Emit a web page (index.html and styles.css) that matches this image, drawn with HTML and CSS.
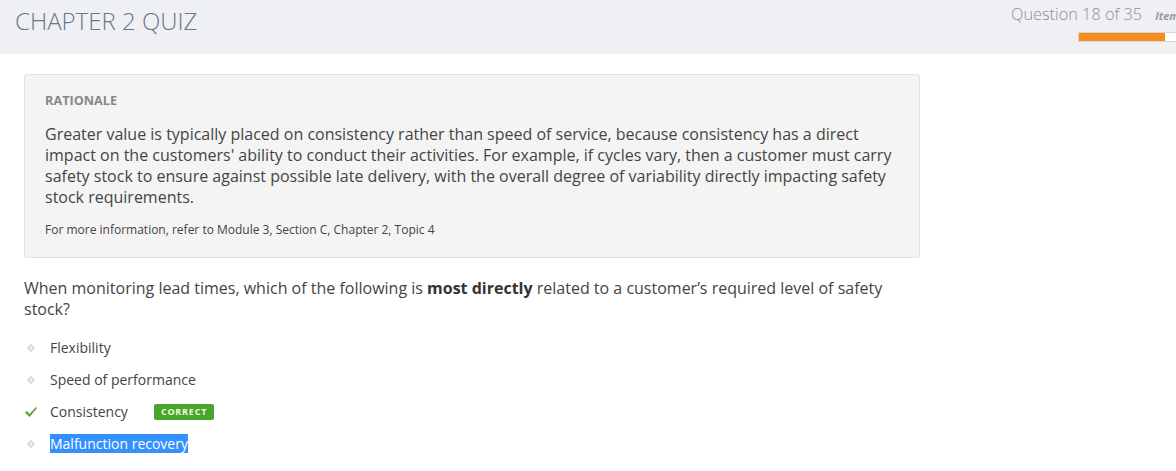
FILE: index.html
```html
<!DOCTYPE html>
<html lang="en">
<head>
<meta charset="utf-8">
<title>Chapter 2 Quiz</title>
<link rel="stylesheet" href="styles.css">
</head>
<body>
<header class="topbar">
  <h1 class="title">CHAPTER 2 QUIZ</h1>
  <div class="meta">
    <div class="meta-row">
      <span class="qcount">Question 18 of 35</span>
      <span class="item-label">Item 18</span>
    </div>
    <div class="progress"><div class="progress-fill" style="width:86px"></div></div>
  </div>
</header>
<main class="content">
  <section class="rationale">
    <h2 class="rationale-head">RATIONALE</h2>
    <p class="rationale-body">Greater value is typically placed on consistency rather than speed of service, because consistency has a direct impact on the customers' ability to conduct their activities. For example, if cycles vary, then a customer must carry safety stock to ensure against possible late delivery, with the overall degree of variability directly impacting safety stock requirements.</p>
    <p class="rationale-ref">For more information, refer to Module 3, Section C, Chapter 2, Topic 4</p>
  </section>
  <p class="question">When monitoring lead times, which of the following is <strong>most directly</strong> related to a customer’s required level of safety stock?</p>
  <ul class="options">
    <li class="option"><span class="mark"><svg width="8" height="8" viewBox="0 0 8 8"><polygon points="4,0.5 7.5,4 4,7.5 0.5,4" fill="#ececec" stroke="#c4c4c4" stroke-width="1"/></svg></span><span class="opt-text">Flexibility</span></li>
    <li class="option"><span class="mark"><svg width="8" height="8" viewBox="0 0 8 8"><polygon points="4,0.5 7.5,4 4,7.5 0.5,4" fill="#ececec" stroke="#c4c4c4" stroke-width="1"/></svg></span><span class="opt-text">Speed of performance</span></li>
    <li class="option"><span class="mark check"><svg width="14" height="12" viewBox="0 0 14 12"><path d="M1 6.5 L3 5 L5.5 8 L12 1 L13 2 L5.5 11 Z" fill="#5b9f2c"/></svg></span><span class="opt-text">Consistency</span><span class="badge">CORRECT</span></li>
    <li class="option"><span class="mark"><svg width="8" height="8" viewBox="0 0 8 8"><polygon points="4,0.5 7.5,4 4,7.5 0.5,4" fill="#ececec" stroke="#c4c4c4" stroke-width="1"/></svg></span><span class="opt-text selected">Malfunction recovery</span></li>
  </ul>
</main>
</body>
</html>
```
FILE: styles.css
```css
html, body {
  margin: 0;
  padding: 0;
  overflow: hidden;
  background: #fff;
}
body {
  font-family: "Open Sans", "Liberation Sans", sans-serif;
  color: #444;
}
.topbar {
  display: flex;
  align-items: flex-start;
  height: 54px;
  background: #eff0f4;
  padding-left: 15px;
  overflow: hidden;
}
.title {
  margin: 0;
  padding-top: 5px;
  font-size: 24px;
  line-height: 32px;
  font-weight: 300;
  color: #6a7787;
}
.meta {
  margin-left: auto;
  margin-right: -40px;
  width: 205px;
  flex: none;
  display: flex;
  flex-direction: column;
}
.meta-row {
  display: flex;
  align-items: baseline;
  gap: 13px;
  padding-top: 3px;
  white-space: nowrap;
}
.qcount {
  font-size: 16.3px;
  line-height: 22px;
  font-weight: 300;
  color: #8e8e8e;
}
.item-label {
  font-size: 11px;
  font-weight: 700;
  font-style: italic;
  color: #9a9a9a;
}
.progress {
  margin-top: 7px;
  margin-left: 67px;
  height: 8px;
  border: 1px solid #d6d6d6;
  background: #fff;
}
.progress-fill {
  height: 100%;
  background: #f68e1f;
}
.content {
  width: 896px;
  padding: 20px 0 0 24px;
}
.rationale {
  background: #f4f4f4;
  border: 1px solid #e2e2e2;
  border-radius: 3px;
  padding: 17px 20px 19px 20px;
}
.rationale-head {
  margin: 0;
  font-size: 12.7px;
  line-height: 17px;
  font-weight: 700;
  color: #888;
}
.rationale-body {
  margin: 15px 0 0 0;
  font-size: 16px;
  line-height: 21px;
  color: #444;
}
.rationale-ref {
  margin: 14px 0 0 0;
  font-size: 12px;
  line-height: 16px;
  color: #444;
}
.question {
  margin: 20px 0 0 0;
  font-size: 16px;
  line-height: 21px;
  color: #444;
}
.question strong {
  font-weight: 700;
  color: #333;
}
.options {
  list-style: none;
  margin: 17px 0 0 0;
  padding: 0;
  display: flex;
  flex-direction: column;
  gap: 11px;
}
.option {
  display: flex;
  align-items: center;
  height: 21px;
  font-size: 14px;
  line-height: 21px;
  color: #444;
}
.mark {
  width: 26px;
  flex: none;
  display: flex;
  align-items: center;
  padding-left: 3px;
  box-sizing: border-box;
}
.mark.check {
  padding-left: 0;
}
.opt-text.selected {
  background: #3390ff;
  color: #fff;
  line-height: 19px;
}
.badge {
  margin-left: 26px;
  background: #47a52c;
  color: #f4f7d8;
  font-size: 9px;
  font-weight: 700;
  letter-spacing: 0.8px;
  line-height: 16px;
  height: 16px;
  padding: 0 7px;
  border-radius: 2px;
}
```
